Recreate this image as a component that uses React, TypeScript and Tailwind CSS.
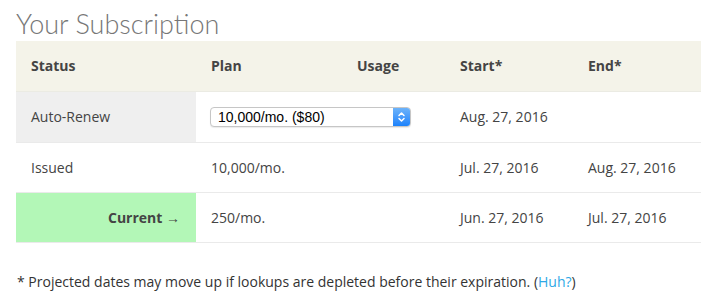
export default function App() {
  const rows = [
    { status: "Issued", plan: "10,000/mo.", start: "Jul. 27, 2016", end: "Aug. 27, 2016" },
  ];
  return (
    <div className="min-h-screen bg-white px-4 pt-[6px] font-['Open_Sans',sans-serif] text-[14px] text-[#444]">
      <h1 className="font-['Lato',sans-serif] text-[27px] font-light leading-[35px] text-[#777]">
        Your Subscription
      </h1>
      <table className="w-[685px] table-fixed border-collapse">
        <colgroup>
          <col className="w-[180px]" />
          <col className="w-[146px]" />
          <col className="w-[103px]" />
          <col className="w-[128px]" />
          <col className="w-[128px]" />
        </colgroup>
        <thead>
          <tr className="h-[50px] border-b border-[#ebebe3] bg-[#f4f3e9] text-left font-bold">
            <th className="pl-[15px]">Status</th>
            <th className="pl-[15px]">Plan</th>
            <th className="pl-[15px]">Usage</th>
            <th className="pl-[15px]">Start*</th>
            <th className="pl-[15px]">End*</th>
          </tr>
        </thead>
        <tbody>
          <tr className="h-[51px] border-b border-[#eaeaea]">
            <td className="bg-[#efefef] pl-[15px]">Auto-Renew</td>
            <td colSpan={2} className="pl-[14px]">
              <div className="flex h-[20px] w-[201px] items-center overflow-hidden rounded-[4px] border border-[#c6c6c6] bg-white shadow-[0_1px_1px_rgba(0,0,0,0.08)]">
                <span className="flex-1 pl-[7px] font-['Liberation_Sans',sans-serif] text-[14px] leading-none text-black">
                  10,000/mo. ($80)
                </span>
                <span className="flex h-full w-[17px] items-center justify-center bg-gradient-to-b from-[#6cb3fa] to-[#1a82fb]">
                  <svg width="9" height="12" viewBox="0 0 9 12" fill="none" stroke="white" strokeWidth="1.5" strokeLinecap="round" strokeLinejoin="round">
                    <path d="M2 4.5 L4.5 2 L7 4.5" />
                    <path d="M2 7.5 L4.5 10 L7 7.5" />
                  </svg>
                </span>
              </div>
            </td>
            <td className="pl-[15px]">Aug. 27, 2016</td>
            <td className="pl-[15px]"></td>
          </tr>
          {rows.map((r) => (
            <tr key={r.status} className="h-[50px] border-b border-[#eaeaea]">
              <td className="pl-[15px]">{r.status}</td>
              <td colSpan={2} className="pl-[15px]">{r.plan}</td>
              <td className="pl-[15px]">{r.start}</td>
              <td className="pl-[15px]">{r.end}</td>
            </tr>
          ))}
          <tr className="h-[50px] border-b border-[#eaeaea]">
            <td className="bg-[#b3f7b7] pr-[16px] text-right font-bold">Current →</td>
            <td colSpan={2} className="pl-[15px]">250/mo.</td>
            <td className="pl-[15px]">Jun. 27, 2016</td>
            <td className="pl-[15px]">Jul. 27, 2016</td>
          </tr>
        </tbody>
      </table>
      <p className="mt-[28px] pl-px text-[14px] text-[#333]">
        * Projected dates may move up if lookups are depleted before their expiration. (
        <a href="#" className="text-[#2ea8e6]">Huh?</a>)
      </p>
    </div>
  );
}
